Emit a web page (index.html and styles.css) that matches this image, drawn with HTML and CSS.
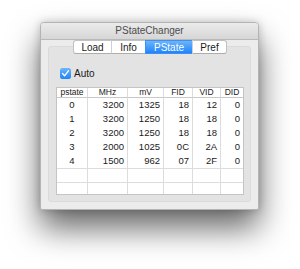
FILE: index.html
```html
<!DOCTYPE html>
<html lang="en">
<head>
  <meta charset="UTF-8">
  <title>PStateChanger</title>
  <link rel="stylesheet" href="styles.css">
</head>
<body>
  <div class="desktop">
    <div class="window">
      <div class="titlebar">PStateChanger</div>
      <div class="content">
        <div class="tabs">
          <div class="tab tab-load">Load</div>
          <div class="tab tab-info">Info</div>
          <div class="tab tab-pstate selected">PState</div>
          <div class="tab tab-pref">Pref</div>
        </div>
        <div class="groupbox">
          <label class="auto">
            <span class="checkbox">
              <svg width="11" height="11" viewBox="0 0 11 11"><polyline points="2.6,5.6 4.6,7.8 8.4,2.8" fill="none" stroke="#fff" stroke-width="1.4" stroke-linecap="round" stroke-linejoin="round"/></svg>
            </span>
            Auto
          </label>
          <div class="tablebox">
            <table class="pstates">
              <colgroup>
                <col style="width:31px"><col style="width:40px"><col style="width:36px"><col style="width:29px"><col style="width:28px"><col style="width:22px">
              </colgroup>
              <thead>
                <tr><th>pstate</th><th>MHz</th><th>mV</th><th>FID</th><th>VID</th><th>DID</th></tr>
              </thead>
              <tbody>
                <tr><td class="c">0</td><td>3200</td><td>1325</td><td>18</td><td>12</td><td>0</td></tr>
                <tr><td class="c">1</td><td>3200</td><td>1250</td><td>18</td><td>18</td><td>0</td></tr>
                <tr><td class="c">2</td><td>3200</td><td>1250</td><td>18</td><td>18</td><td>0</td></tr>
                <tr><td class="c">3</td><td>2000</td><td>1025</td><td>0C</td><td>2A</td><td>0</td></tr>
                <tr><td class="c">4</td><td>1500</td><td>962</td><td>07</td><td>2F</td><td>0</td></tr>
                <tr class="empty"><td></td><td></td><td></td><td></td><td></td><td></td></tr>
                <tr class="empty last"><td></td><td></td><td></td><td></td><td></td><td></td></tr>
              </tbody>
            </table>
          </div>
        </div>
      </div>
    </div>
  </div>
</body>
</html>
```

FILE: styles.css
```css
html, body {
  margin: 0;
  background: #fff;
  font-family: "Liberation Sans", Arial, sans-serif;
}
.desktop {
  height: 269px;
  padding: 22px 0 0 40px;
  box-sizing: border-box;
}
.window {
  width: 219px;
  height: 188px;
  box-sizing: border-box;
  border: 1px solid #b4b4b4;
  border-radius: 4px 4px 2px 2px;
  background: #ececec;
  box-shadow: 0 18px 32px rgba(0, 0, 0, 0.6), 0 0 8px rgba(0, 0, 0, 0.2);
}
.titlebar {
  height: 16px;
  line-height: 16px;
  text-align: center;
  font-size: 10px;
  color: #4d4d4d;
  background: linear-gradient(#ebebeb, #d6d6d6);
  border-bottom: 1px solid #b9b9b9;
  border-radius: 3px 3px 0 0;
}
.content {
  padding: 0 7px 7px;
}
.tabs {
  display: flex;
  justify-content: center;
  position: relative;
  z-index: 1;
  margin-left: 1px;
}
.tab {
  height: 14px;
  box-sizing: border-box;
  line-height: 13px;
  font-size: 10px;
  color: #1a1a1a;
  text-align: center;
  background: #fff;
  border-top: 1px solid #c2c2c2;
  border-bottom: 1px solid #adadad;
  border-left: 1px solid #d0d0d0;
}
.tab-load { width: 38px; border-left-color: #c2c2c2; border-radius: 3px 0 0 3px; }
.tab-info { width: 34px; }
.tab-pstate { width: 47px; }
.tab-pref { width: 35px; border-right: 1px solid #c2c2c2; border-radius: 0 3px 3px 0; }
.tab.selected {
  color: #fff;
  background: linear-gradient(#6cb5fb, #1f84fb);
  border-color: #3d8ef5;
}
.groupbox {
  margin-top: -8px;
  height: 156px;
  box-sizing: border-box;
  padding: 20px 6px 0 7px;
  background: #e3e3e3;
  border: 1px solid #dadada;
  border-radius: 3px;
}
.auto {
  display: flex;
  align-items: center;
  gap: 3px;
  height: 13px;
  margin-left: 4px;
  font-size: 10px;
  color: #1a1a1a;
}
.checkbox {
  width: 11px;
  height: 11px;
  border-radius: 2.5px;
  background: linear-gradient(#6ab6fb, #1f85f8);
  display: flex;
}
.tablebox {
  margin-top: 7px;
  width: 188px;
  height: 108px;
  box-sizing: border-box;
  border: 1px solid #c4c4c4;
  background: #fff;
  overflow: hidden;
}
.pstates {
  width: 186px;
  table-layout: fixed;
  border-collapse: separate;
  border-spacing: 0;
  color: #1a1a1a;
}
.pstates th {
  height: 9px;
  padding: 0;
  font-size: 8.5px;
  font-weight: normal;
  line-height: 9px;
  text-align: center;
  border-bottom: 1px solid #c8c8c8;
  border-right: 1px solid #dcdcdc;
}
.pstates td {
  height: 14px;
  padding: 0 3px 0 0;
  font-size: 9.5px;
  line-height: 14px;
  text-align: right;
  border-right: 1px solid #dcdcdc;
}
.pstates th:last-child,
.pstates td:last-child {
  border-right: none;
}
.pstates td.c {
  text-align: center;
  padding: 0;
}
.pstates tr.empty td {
  border-top: 1px solid #dcdcdc;
  height: 13px;
}
.pstates tr.last td {
  height: 11px;
}
```
